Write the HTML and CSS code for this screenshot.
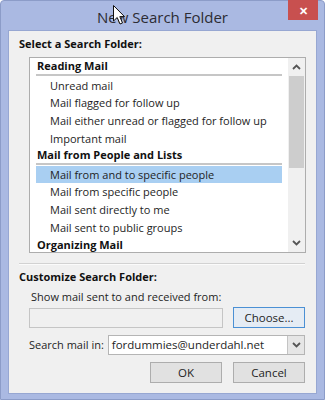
FILE: index.html
```html
<!DOCTYPE html>
<html lang="en">
<head>
    <meta charset="UTF-8">
    <meta name="viewport" content="width=device-width, initial-scale=1.0">
    <title>New Search Folder</title>
    <link rel="stylesheet" href="styles.css">
</head>
<body>

    <div class="window">
        <div class="titlebar">
            <div class="title">New Search Folder</div>
            <div class="close">&#x2715;</div>
        </div>

        <div class="client">
            <div class="label-bold">Select a Search Folder:</div>

            <div class="listbox">
                <div class="rows">
                    <div class="group">Reading Mail</div>
                    <div class="item">Unread mail</div>
                    <div class="item">Mail flagged for follow up</div>
                    <div class="item">Mail either unread or flagged for follow up</div>
                    <div class="item">Important mail</div>
                    <div class="group">Mail from People and Lists</div>
                    <div class="item selected">Mail from and to specific people</div>
                    <div class="item">Mail from specific people</div>
                    <div class="item">Mail sent directly to me</div>
                    <div class="item">Mail sent to public groups</div>
                    <div class="group">Organizing Mail</div>
                </div>
                <div class="scrollbar">
                    <div class="arrow">
                        <svg width="9" height="6" viewBox="0 0 9 6"><polyline points="1,5 4.5,1.5 8,5" fill="none" stroke="#555" stroke-width="1.8"/></svg>
                    </div>
                    <div class="thumb"></div>
                    <div class="track"></div>
                    <div class="arrow">
                        <svg width="9" height="6" viewBox="0 0 9 6"><polyline points="1,1 4.5,4.5 8,1" fill="none" stroke="#555" stroke-width="1.8"/></svg>
                    </div>
                </div>
            </div>

            <div class="separator"></div>

            <div class="label-bold customize">Customize Search Folder:</div>
            <div class="label show">Show mail sent to and received from:</div>

            <div class="row pick-row">
                <div class="textbox"></div>
                <div class="button default">Choose...</div>
            </div>

            <div class="row search-row">
                <div class="label">Search mail in:</div>
                <div class="combo">
                    <div class="combo-text">fordummies@underdahl.net</div>
                    <div class="combo-btn">
                        <svg width="9" height="6" viewBox="0 0 9 6"><polyline points="1,1 4.5,4.5 8,1" fill="none" stroke="#555" stroke-width="1.8"/></svg>
                    </div>
                </div>
            </div>

            <div class="row buttons">
                <div class="button">OK</div>
                <div class="button">Cancel</div>
            </div>
        </div>

        <!-- mouse pointer over the title -->
        <svg class="cursor" width="13" height="20" viewBox="0 0 13 20">
            <path d="M0.5,0.5 L0.5,16 L4.2,12.5 L7,19 L9.5,18 L6.8,11.6 L11.5,11.6 Z" fill="#fff" stroke="#111" stroke-width="1"/>
        </svg>
    </div>

</body>
</html>
```

FILE: styles.css
```css
* {
    box-sizing: border-box;
}

body {
    margin: 0;
    padding: 0;
    width: 325px;
    height: 400px;
    overflow: hidden;
    background-color: #ffffff;
    font-family: "Open Sans", "Noto Sans", sans-serif;
    font-size: 11px;
    color: #1e1e1e;
}

.window {
    position: relative;
    width: 325px;
    height: 400px;
    background-color: #aab9e2;
    border: 1px solid #8c9cc8;
    border-radius: 4px 4px 0 0;
    padding: 0 7px 5px 7px;
    display: flex;
    flex-direction: column;
}

.titlebar {
    position: relative;
    height: 29px;
    display: flex;
    justify-content: center;
    align-items: center;
}

.title {
    font-size: 15px;
    color: #2c2c34;
    margin-top: 2px;
}

.close {
    position: absolute;
    top: -1px;
    right: -1px;
    width: 30px;
    height: 20px;
    background-color: #c8504f;
    color: #ffffff;
    font-size: 11px;
    font-weight: bold;
    display: flex;
    justify-content: center;
    align-items: center;
}

.client {
    flex: 1;
    background-color: #f0f0f0;
    border: 1px solid #97a7d2;
    padding: 5px 11px 0 10px;
}

.label-bold {
    font-weight: bold;
    line-height: 16px;
    color: #111;
}

.label {
    line-height: 16px;
}

.listbox {
    margin: 5px -1px 0 10px;
    height: 196px;
    background-color: #ffffff;
    border: 1px solid #adadad;
    display: flex;
    padding-left: 6px;
    overflow: hidden;
}

.rows {
    flex: 1;
    margin-right: 6px;
}

.group {
    font-weight: bold;
    color: #111;
    height: 18px;
    line-height: 16px;
    padding-left: 1px;
    border-bottom: 2px solid #c6c6c6;
    margin-bottom: 0.5px;
}

.item {
    height: 17.7px;
    line-height: 17.7px;
    padding-left: 14px;
    white-space: nowrap;
}

.item.selected {
    background-color: #a9cff2;
}

.scrollbar {
    width: 17px;
    background-color: #f0f0f0;
    display: flex;
    flex-direction: column;
}

.arrow {
    height: 18px;
    display: flex;
    justify-content: center;
    align-items: center;
}

.thumb {
    height: 92px;
    background-color: #cdcdcd;
    margin: 0 1px;
}

.track {
    flex: 1;
}

.separator {
    margin-top: 10px;
    height: 2px;
    background-color: #d2d2d2;
    border-bottom: 1px solid #fbfbfb;
}

.customize {
    margin-top: 4px;
}

.show {
    margin-top: 4px;
    padding-left: 12px;
}

.row {
    display: flex;
    align-items: center;
}

.pick-row {
    margin-top: 2px;
    padding-left: 10px;
    gap: 10px;
}

.textbox {
    width: 194px;
    height: 20px;
    background-color: #f0f0f0;
    border: 1px solid #c5c5c5;
}

.button {
    width: 72px;
    height: 21px;
    background-color: #e1e1e1;
    border: 1px solid #adadad;
    display: flex;
    justify-content: center;
    align-items: center;
    font-size: 11.5px;
}

.button.default {
    border-color: #4b90d4;
    background-color: #e5ecf4;
}

.search-row {
    margin-top: 7px;
    padding-left: 10px;
    gap: 4px;
}

.combo {
    flex: 1;
    height: 20px;
    background-color: #ffffff;
    border: 1px solid #b5b5b5;
    display: flex;
}

.combo-text {
    flex: 1;
    line-height: 18px;
    padding-left: 3px;
    font-size: 11.5px;
}

.combo-btn {
    width: 17px;
    background-color: #e6e6e6;
    border-left: 1px solid #c4c4c4;
    display: flex;
    justify-content: center;
    align-items: center;
}

.buttons {
    margin-top: 7px;
    justify-content: flex-end;
    gap: 11px;
}

.cursor {
    position: absolute;
    left: 112px;
    top: 4px;
}
```
